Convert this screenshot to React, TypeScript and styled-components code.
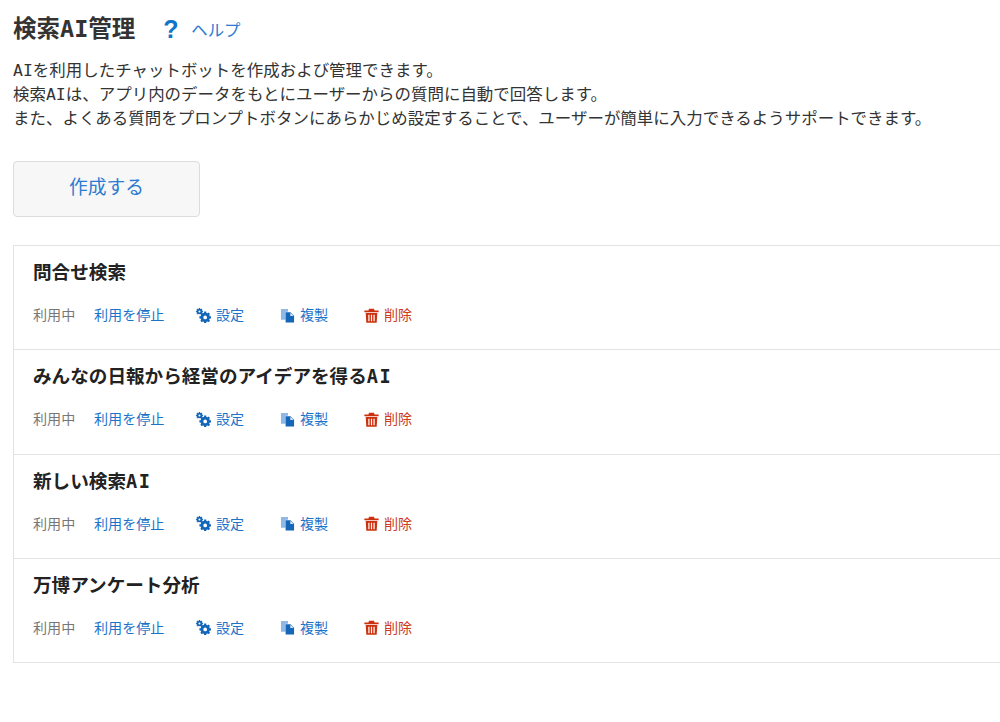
import React from "react";
import styled, { createGlobalStyle } from "styled-components";

const Global = createGlobalStyle`
  html, body { margin: 0; padding: 0; background: #fff; overflow: hidden; }
  body { font-family: "Noto Sans CJK JP", "Noto Sans", sans-serif; }
`;
const Page = styled.div`
  width: 1000px; height: 722px; box-sizing: border-box; padding: 14px 0 0 13px; overflow: hidden;
`;
const Header = styled.div`
  display: flex; align-items: center; height: 30px;
`;
const Title = styled.h1`
  margin: -4px 0 0; font-size: 23.5px; font-weight: 700; color: #333; line-height: 30px; white-space: nowrap;
`;
const Latin = styled.span`
  font-family: "DejaVu Sans Mono", monospace;
  line-height: 1;
`;
const HelpMark = styled.span`
  margin-left: 28px; font-family: "Liberation Sans", sans-serif; font-size: 25px; font-weight: 700; color: #1173c9; line-height: 30px; width: 21px;
`;
const HelpLink = styled.a`
  margin-left: 7px; font-size: 16.4px; color: #2a7bd1; line-height: 30px;
`;
const Description = styled.p`
  margin: 13px 0 0; font-size: 16.48px; line-height: 24px; color: #333; white-space: nowrap;
`;
const CreateButton = styled.button`
  display: block; margin-top: 32px; width: 187px; height: 56px; box-sizing: border-box;
  background: #f7f7f7; border: 1px solid #dcdcdc; border-radius: 4px;
  color: #2a7bd1; font-family: inherit; font-size: 18.75px; line-height: 48px; padding: 0 0 6px;
`;
const List = styled.div`
  margin-top: 28px; border: 1px solid #e3e3e3; border-right: none; width: 987px; box-sizing: border-box;
`;
const Row = styled.div`
  height: 104.3px; box-sizing: border-box; padding: 11px 19px 0;
  &:first-child { height: 103.4px; }
  & + & { border-top: 1px solid #e3e3e3; }
`;
const RowTitle = styled.div`
  font-size: 18.6px; font-weight: 700; color: #222; line-height: 28px; white-space: nowrap;
  ${Latin} { letter-spacing: 1.5px; }
`;
const Actions = styled.div`
  display: flex; align-items: center; height: 24px; margin-top: 17px; font-size: 14.1px; white-space: nowrap;
`;
const Status = styled.span`
  color: #777; width: 61px;
`;
const ActionLink = styled.a<{ $danger?: boolean; $width: number }>`
  display: inline-flex; align-items: center; gap: 5px; width: ${(p) => p.$width}px;
  color: ${(p) => (p.$danger ? "#cc3b1a" : "#1a72c9")};
`;
const IconSlot = styled.svg`
  width: 15px; height: 15px; flex: none;
  margin-top: 2px;
`;

const GearIcon = () => (
  <IconSlot viewBox="0 0 16 16">
    <g fill="none" stroke="#1466b8">
      <circle cx="9.8" cy="10" r="3.5" strokeWidth="3" />
      <path strokeWidth="2.4" d="M9.8 3.8v2M9.8 14.2v1.8M3.6 10h2M14 10h2M5.4 5.6l1.4 1.4M12.8 13l1.4 1.4M5.4 14.4l1.4-1.4M12.8 7l1.4-1.4" />
      <circle cx="3.7" cy="3.7" r="2" strokeWidth="1.9" />
      <path strokeWidth="1.4" d="M3.7 0v1M0 3.7h1M6.4 3.7h1M1 1l.8.8M5.6 1.8l.8-.8M1 6.4l.8-.8" />
    </g>
  </IconSlot>
);
const CopyIcon = () => (
  <IconSlot viewBox="0 0 16 16">
    <path d="M1 1h7.5v3H6v8.5H1z" fill="#8fb8e4" />
    <path d="M6 4.5h5.2L15 8.3V15.5H6z" fill="#1466b8" />
    <path d="M11 4.8v3.7h3.7z" fill="#d6e5f5" />
  </IconSlot>
);
const TrashIcon = () => (
  <IconSlot viewBox="0 0 16 16" fill="#c9310f">
    <path d="M5.4 .8h5.2l.7 1.8H15.6v2H.4v-2h4.3z" />
    <path fillRule="evenodd" d="M1.8 5.4h12.4L13.5 15.6h-11zM4.6 7.2v6.8h1.3V7.2zm2.75 0v6.8h1.3V7.2zm2.75 0v6.8h1.3V7.2z" />
  </IconSlot>
);

const items: React.ReactNode[] = [
  "問合せ検索",
  <>みんなの日報から経営のアイデアを得る<Latin>AI</Latin></>,
  <>新しい検索<Latin>AI</Latin></>,
  "万博アンケート分析",
];

export default function App() {
  return (
    <Page>
      <Global />
      <Header>
        <Title>検索<Latin>AI</Latin>管理</Title>
        <HelpMark>?</HelpMark>
        <HelpLink>ヘルプ</HelpLink>
      </Header>
      <Description>
        <Latin>AI</Latin>を利用したチャットボットを作成および管理できます。
        <br />
        検索<Latin>AI</Latin>は、アプリ内のデータをもとにユーザーからの質問に自動で回答します。
        <br />
        また、よくある質問をプロンプトボタンにあらかじめ設定することで、ユーザーが簡単に入力できるようサポートできます。
      </Description>
      <CreateButton>作成する</CreateButton>
      <List>
        {items.map((name, i) => (
          <Row key={i}>
            <RowTitle>{name}</RowTitle>
            <Actions>
              <Status>利用中</Status>
              <ActionLink $width={102}>利用を停止</ActionLink>
              <ActionLink $width={84}>
                <GearIcon />
                設定
              </ActionLink>
              <ActionLink $width={84}>
                <CopyIcon />
                複製
              </ActionLink>
              <ActionLink $width={60} $danger>
                <TrashIcon />
                削除
              </ActionLink>
            </Actions>
          </Row>
        ))}
      </List>
    </Page>
  );
}
